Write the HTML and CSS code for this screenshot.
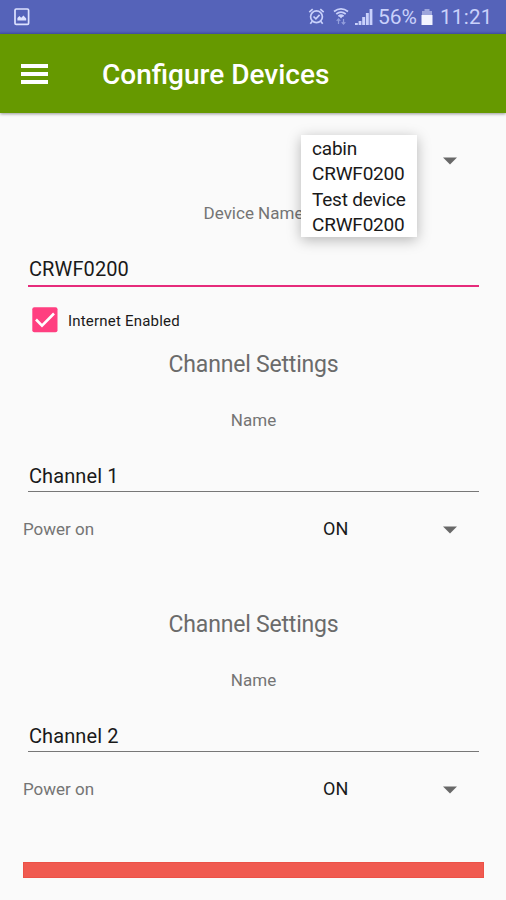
FILE: index.html
```
<!DOCTYPE html>
<html lang="en">
<head>
<meta charset="utf-8">
<title>Configure Devices</title>
<link rel="stylesheet" href="styles.css">
</head>
<body>
<div class="status">
  <svg class="picture" width="16" height="18" viewBox="0 0 16 18"><rect x="1" y="1" width="13.6" height="15.4" rx="1.2" fill="none" stroke="#dde2ff" stroke-width="1.7"/><path d="M3.4 12.5V10l2-2 1.8 1.8L9.500 7.500l2.700 3v2z" fill="#dde2ff"/></svg>
  <div class="indicators">
    <svg class="alarm" width="17" height="19" viewBox="0 0 17 19" fill="none" stroke="#c9d1fb" stroke-width="1.7"><circle cx="8.500" cy="9.800" r="5.900"/><path d="M5.500 9.500l2.400 2.300 3.700-4M1.300 5.200l3.400-3.100M15.700 5.200l-3.400-3.100M4.300 14.300l-2 2.500M12.700 14.300l2 2.500"/></svg>
    <svg class="wifi" width="16" height="19" viewBox="0 0 16 19" fill="none" stroke="#c9d1fb" stroke-width="1.800"><path d="M1 4.500Q8-.8 15 4.500M3.300 7Q8 3.300 12.700 7M5.400 9.200Q8 7.300 10.600 9.200"/><path d="M6 9h4l-2 2.500z" fill="#c9d1fb" stroke="none"/><path d="M5.500 12v5M3.700 13.800l1.800-2 1.800 2M10.500 12v5M8.700 15.200l1.800 2 1.800-2" stroke="#929edc" stroke-width="1.200"/></svg>
    <svg class="signal" width="18" height="18" viewBox="0 0 18 18" fill="#c9d1fb"><path d="M0 15h2.800v2H0zM3.600 13h2.800v4H3.600zM7.200 9h2.900v8H7.200zM10.900 5h2.900v12h-2.900zM14.600 1h2.800v16h-2.800z"/></svg>
    <span class="percent">56%</span>
    <svg class="battery" width="12" height="18" viewBox="0 0 12 18"><path d="M3.500 1h5v2H11v5H1V3h2.500z" fill="#9ca5dc"/><path d="M.5 7h11v10H.5z" fill="#f2f4ff"/></svg>
    <span class="clock">11:21</span>
  </div>
</div>
<header class="appbar">
  <div class="burger"><i></i><i></i><i></i></div>
  <h1 class="heading">Configure Devices</h1>
</header>
<main class="content">
  <div class="device-picker">
    <svg class="arrow" width="14" height="8" viewBox="0 0 14 8"><path d="M0 .5h14L7 7.500z" fill="#686868"/></svg>
    <ul class="menu"><li>cabin</li><li>CRWF0200</li><li>Test device</li><li>CRWF0200</li></ul>
  </div>
  <div class="label device-label">Device Name</div>
  <div class="field focused">CRWF0200</div>
  <div class="check-row">
    <svg width="26" height="26" viewBox="0 0 26 26"><rect x=".3" y=".3" width="25.200" height="25" rx="2" fill="#ff3f80"/><path d="M4 12.500l6 6.200L22 6.500" fill="none" stroke="#fff" stroke-width="2.600"/></svg>
    <span>Internet Enabled</span>
  </div>
  <section class="channel">
    <h2>Channel Settings</h2>
    <div class="label">Name</div>
    <div class="field">Channel 1</div>
    <div class="power"><span class="caption">Power on</span><span class="value">ON</span><svg class="arrow" width="14" height="8" viewBox="0 0 14 8"><path d="M0 .5h14L7 7.500z" fill="#686868"/></svg></div>
  </section>
  <section class="channel second">
    <h2>Channel Settings</h2>
    <div class="label">Name</div>
    <div class="field">Channel 2</div>
    <div class="power"><span class="caption">Power on</span><span class="value">ON</span><svg class="arrow" width="14" height="8" viewBox="0 0 14 8"><path d="M0 .5h14L7 7.500z" fill="#686868"/></svg></div>
  </section>
  <div class="bar"></div>
</main>
</body>
</html>
```
FILE: styles.css
```
* { box-sizing: border-box; }
body { margin: 0; height: 900px; overflow: hidden; background: #fafafa; font-family: Roboto, sans-serif; color: #191919; }
svg { display: block; flex: none; }
.status { height: 34px; background: linear-gradient(#5563b9 31px, #4655aa); display: flex; justify-content: space-between; padding: 0 14px; color: #c9d1fb; }
.picture { margin-top: 8px; }
.indicators { display: flex; font-size: 20px; line-height: 35px; }
.alarm { margin: 7px 8px 0 0; }
.wifi { margin: 7px 6px 0 0; }
.signal { margin: 8px 5px 0 0; }
.percent { width: 39px; font-size: 21px; letter-spacing: -.1px; }
.battery { margin: 8px 7px 0 4px; }
.clock { width: 52px; font-size: 20.500px; letter-spacing: .3px; }
.appbar { height: 79px; background: #669900; display: flex; align-items: center; padding-left: 21px; box-shadow: 0 1px 3px rgba(0,0,0,.4); }
.burger { width: 27px; height: 20px; display: flex; flex-direction: column; justify-content: space-between; }
.burger i { height: 4px; background: #fff; }
.heading { margin: 3px 0 0 54px; font-size: 28px; font-weight: 500; color: #fff; line-height: 32px; }
.content { padding: 3px 22px 0 23px; }
.device-picker { height: 88px; position: relative; display: flex; align-items: center; justify-content: flex-end; }
.arrow { margin: 1px 27px 0 0; }
.menu { position: absolute; left: 278px; top: 19px; width: 116px; height: 102px; margin: 0; padding: 1px 0 0 11px; list-style: none; background: #fff; box-shadow: 0 3px 13px rgba(0,0,0,.28); font-size: 19px; letter-spacing: -.2px; line-height: 25.300px; white-space: nowrap; }
.label { height: 18px; line-height: 18px; font-size: 17px; color: #747474; text-align: center; }
.field { height: 31px; line-height: 30px; margin: 32px 5px 0; padding-left: 1px; border-bottom: 1px solid #777; font-size: 20px; letter-spacing: .1px; }
.focused { height: 35px; line-height: 35px; margin-top: 30px; border-bottom: 2px solid #e62b7b; }
.check-row { height: 26px; margin-top: 20px; padding-left: 9px; display: flex; align-items: center; gap: 10px; font-size: 15px; line-height: 20px; letter-spacing: .2px; }
.check-row span { padding-top: 2px; }
.channel { padding-top: 16px; }
.channel h2 { margin: 0 0 32px; height: 30px; line-height: 32px; font-size: 23px; letter-spacing: -.2px; font-weight: 400; text-align: center; color: #6b6b6b; }
.second { padding-top: 68px; }
.power { height: 24px; margin-top: 25px; display: grid; grid-template-columns: 300px 1fr auto; align-items: center; line-height: 24px; }
.caption { font-size: 17px; color: #747474; }
.value { font-size: 18px; }
.bar { height: 16px; margin-top: 61px; background: #f05a50; border: 1px solid #ec5147; }
```
